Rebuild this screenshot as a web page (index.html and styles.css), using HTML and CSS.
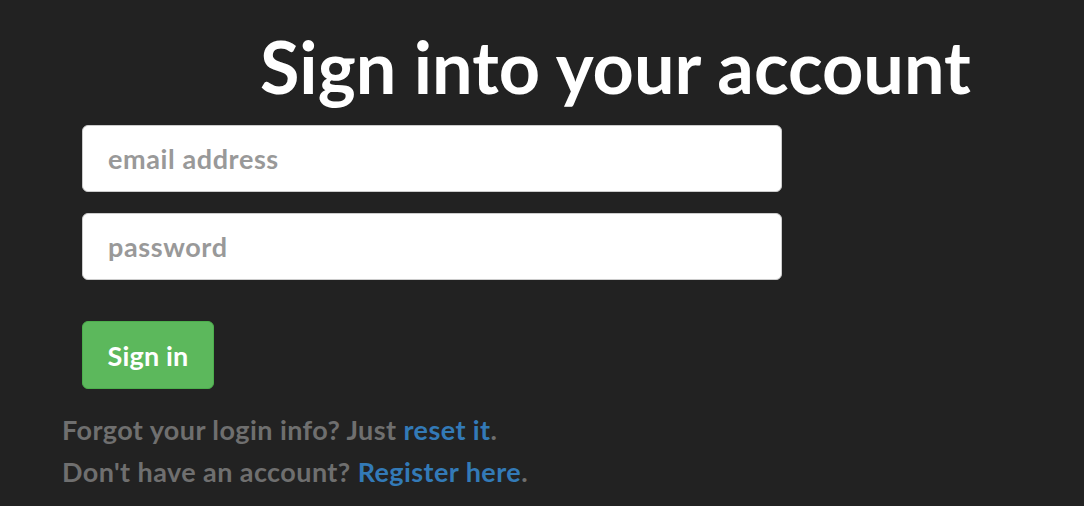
FILE: index.html
```html
<!DOCTYPE html>
<html>
<head>
<meta charset="utf-8">
<link rel="stylesheet" href="styles.css">
</head>
<body>
<main class="page">
  <h1 class="title">Sign into your account</h1>
  <form class="form">
    <input class="field" type="email" placeholder="email address">
    <input class="field" type="password" placeholder="password">
    <button class="btn" type="button">Sign in</button>
  </form>
  <div class="help">
    <p>Forgot your login info? Just <a href="#">reset it</a>.</p>
    <p>Don't have an account? <a href="#">Register here</a>.</p>
  </div>
</main>
</body>
</html>
```
FILE: styles.css
```css
html, body {
  margin: 0;
  padding: 0;
  background: #222222;
  height: 100%;
}
body {
  font-family: Lato, "Liberation Sans", sans-serif;
  font-weight: 700;
}
.page {
  display: flex;
  flex-direction: column;
  padding: 0 0 0 62px;
}
.title {
  margin: 27px 0 0 198px;
  font-size: 72px;
  line-height: 79px;
  font-weight: 700;
  color: #ffffff;
}
.form {
  display: flex;
  flex-direction: column;
  align-items: flex-start;
  padding-left: 20px;
  margin-top: 19px;
  gap: 21px;
}
.field {
  box-sizing: border-box;
  width: 700px;
  height: 67px;
  border: 1px solid #cccccc;
  border-radius: 6px;
  background: #ffffff;
  padding: 0 25px;
  font-family: Lato, sans-serif;
  font-weight: 700;
  font-size: 27px;
  letter-spacing: 0.6px;
  color: #555;
  outline: none;
}
.field::placeholder {
  color: #999999;
}
.btn {
  margin-top: 20px;
  box-sizing: border-box;
  width: 132px;
  height: 68px;
  background: #5cb85c;
  border: 1px solid #4cae4c;
  border-radius: 6px;
  color: #ffffff;
  font-family: Lato, sans-serif;
  font-weight: 700;
  font-size: 27px;
  letter-spacing: 0.15px;
  padding: 0;
}
.help {
  margin-top: 20px;
  color: #6f6f6f;
  font-size: 27px;
  letter-spacing: 0.42px;
  line-height: 42px;
}
.help p {
  margin: 0;
}
.help a {
  color: #337ab7;
  text-decoration: none;
}
```
